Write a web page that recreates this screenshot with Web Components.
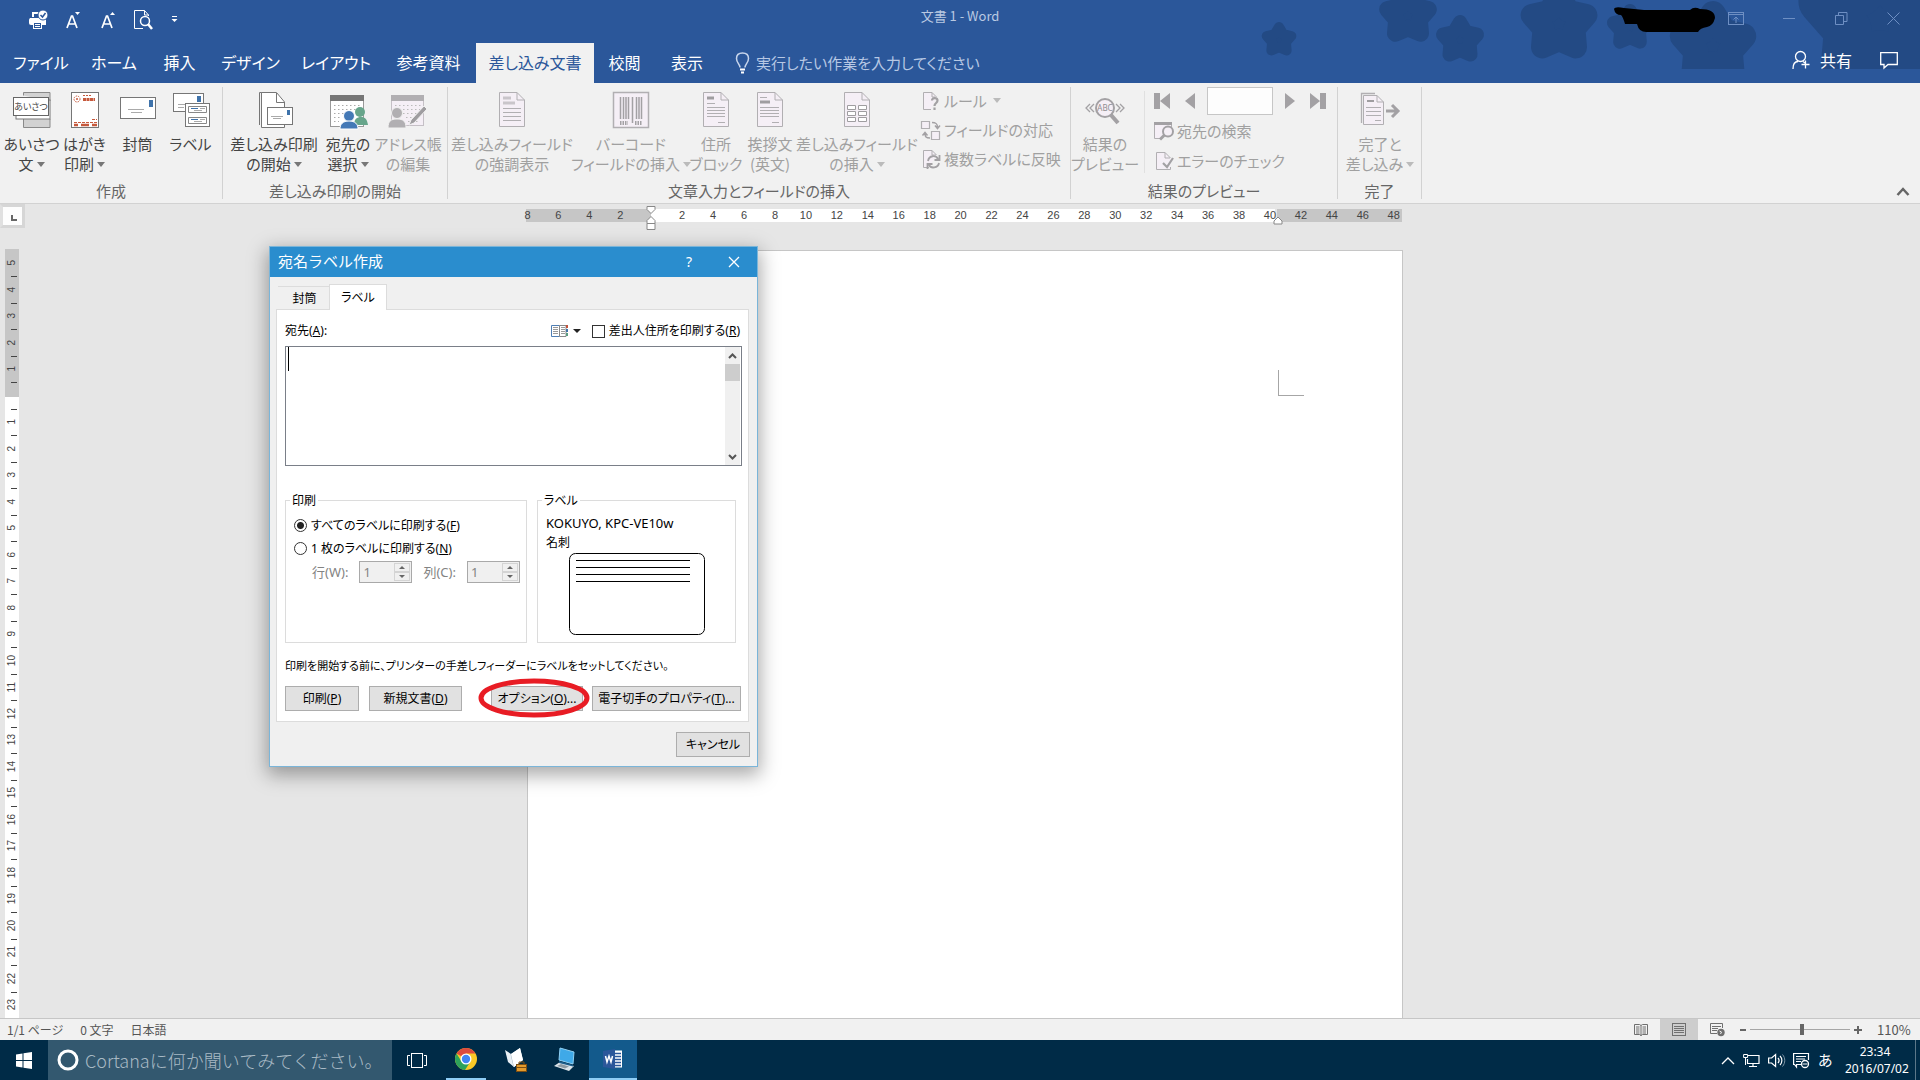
<!DOCTYPE html>
<html lang="ja">
<head>
<meta charset="utf-8">
<title>文書 1 - Word</title>
<style>
html, body { margin: 0; height: 100%; }
body { overflow: hidden; font-family: "Noto Sans CJK JP", sans-serif; font-feature-settings: "palt"; }
</style>
</head>
<body>
<word-desktop></word-desktop>

<script>
const define = (name, html, setup) => {
  const template = document.createElement('template');
  template.innerHTML = html;
  customElements.define(name, class extends HTMLElement {
    constructor() {
      super();
      this.attachShadow({ mode: 'open' }).append(template.content.cloneNode(true));
    }
    connectedCallback() { if (setup && !this.ready) { this.ready = true; setup(this, this.shadowRoot); } }
  });
};

/* ---------- icons: [width, height, markup] ---------- */
const pageShape = (w, h, f, stroke, fill) =>
  `<path d="M.5 .5H${w - f}L${w - .5} ${f}V${h - .5}H.5Z" fill="${fill}" stroke="${stroke}"/><path d="M${w - f} .5V${f}H${w - .5}" fill="none" stroke="${stroke}"/>`;
const G = '#b1afb2', P = '#f5eff6', D = '#6f6f6f';
const ICONS = {
  quickprint: [20, 20, `<g fill="none" stroke="#fff" stroke-width="2"><path d="M5 7V3h6"/><path d="M2 9h4M2 13h3M15 14h3"/></g><rect x="1" y="8" width="17" height="7" rx="2" fill="#fff"/><rect x="5.500" y="12.500" width="8" height="6" fill="#2b579a" stroke="#fff"/><path d="M7 14.500h5M7 16.500h5" stroke="#fff"/><circle cx="15" cy="5" r="5" fill="#fff" stroke="#2b579a"/><path d="M12.500 5l2 2 3-4" fill="none" stroke="#2b579a" stroke-width="1.500"/>`],
  fontdown: [16, 18, `<path d="M1 17L5.500 5h1L11 17M3 13h6" fill="none" stroke="#fff" stroke-width="1.700"/><path d="M9 1h5l-2.500 3z" fill="#fff"/>`],
  fontup: [16, 18, `<path d="M2 17L6.500 5h1L12 17M4 13h6" fill="none" stroke="#fff" stroke-width="1.700"/><path d="M10 4h5l-2.500-3z" fill="#fff"/>`],
  preview: [19, 20, `<path d="M14.500 6V5L10.500 .500H.5V18.500H9M10.500 .500V5H14.500" fill="none" stroke="#fff"/><circle cx="11" cy="11" r="4.500" fill="none" stroke="#fff" stroke-width="1.500"/><path d="M14 14l4 5" stroke="#fff" stroke-width="2.500"/>`],
  custom: [7, 7, `<path d="M1 .500h5" stroke="#fff"/><path d="M.500 3h6l-3 3z" fill="#fff"/>`],
  bulb: [15, 22, `<path d="M5 15.500C5 12 1.500 11 1.500 6.500 1.500 3 4 1 7.500 1s6 2 6 5.500C13.500 11 10 12 10 15.500" fill="none" stroke="#c7d5ec" stroke-width="1.500"/><path d="M5 17.500h5M6 20.500h3" stroke="#fff" stroke-width="2"/>`],
  ribbonopt: [16, 13, `<rect x=".500" y=".500" width="15" height="12" fill="none" stroke="#6e8fc3"/><path d="M1 2.500h14M8 11V5M5.500 7.500L8 5l2.500 2.500" fill="none" stroke="#6e8fc3"/>`],
  min: [13, 13, `<path d="M0 6.500h12" stroke="#6e8fc3"/>`],
  restore: [13, 13, `<path d="M.5 3.500h8v9h-8zM3.500 3V.5h8.500v9H9" fill="none" stroke="#6e8fc3"/>`],
  close: [13, 13, `<path d="M.5 .5l12 12M12.500 .5l-12 12" stroke="#6e8fc3"/>`],
  person: [19, 20, `<circle cx="8.500" cy="6.500" r="5" fill="none" stroke="#fff" stroke-width="1.300"/><path d="M1 19C1 14 3 11.500 6 11.500M11 11.500l2 1.500M13.500 10.500v8M9.500 14.500h8" fill="none" stroke="#fff" stroke-width="1.300"/>`],
  comment: [18, 17, `<path d="M.700 .700H17.300V12.500H8L4 16V12.500H.700Z" fill="none" stroke="#fff" stroke-width="1.300"/>`],
  collapse: [14, 9, `<path d="M1.500 8L7 2l5.500 6" fill="none" stroke="#666" stroke-width="2.500"/>`],
  greeting: [38, 38, `<path d="M10.500 4.500V1.500H37V10M10.500 28V36.500H37V28" fill="#d2d2d2" stroke="#8a8a8a"/><rect x="3" y="9" width="34" height="19" fill="#fff" stroke="#777"/><rect x=".500" y="6.500" width="35" height="18" fill="#fff" stroke="#666"/><text x="18" y="19" font-size="9" text-anchor="middle" fill="#444" style="font-family:'Noto Sans CJK JP',sans-serif">あいさつ</text>`],
  postcard: [38, 38, `<rect x="5.500" y="1.500" width="27" height="35" fill="#fff" stroke="#767676"/><circle cx="11" cy="8" r="3" fill="none" stroke="#c6593c" stroke-dasharray="1.500 1"/><circle cx="11" cy="8" r="1" fill="#c6593c"/><path d="M17 4.500h9" stroke="#c6593c" stroke-dasharray="2 1"/><path d="M17 8.500h12" stroke="#c6593c" stroke-width="3" stroke-dasharray="3 .5"/><path d="M26 28.500h5M8 31.500h23" stroke="#c6593c" stroke-dasharray="3 1"/><path d="M8 34h4M15 34h8M26 34h5" stroke="#c6593c" stroke-width="2.500"/>`],
  envelope: [38, 38, `<rect x="1.500" y="6.500" width="35" height="21" fill="#fff" stroke="#767676"/><rect x="30" y="9" width="4" height="7" fill="#3f73ab"/><path d="M9 18.500h16M12 21.500h11" stroke="#aaa"/>`],
  labels: [38, 38, `<rect x="1.500" y="2.500" width="30" height="18" fill="#fff" stroke="#767676"/><rect x="25" y="5" width="4" height="6" fill="#3f73ab"/><path d="M6 13.500h7M6 16.500h6" stroke="#aaa"/><rect x="13.500" y="12.500" width="24" height="23" fill="#fff" stroke="#767676"/><path d="M16.500 15.500h18v6h-18zM16.500 26.500h18v6h-18z" fill="#fff" stroke="#888"/><path d="M19 17.500h7M19 28.500h7" stroke="#3f73ab"/><path d="M28 17.500h5M22 19.500h8M28 28.500h5M22 30.500h8" stroke="#aaa"/>`],
  mailmerge: [38, 38, `<path d="M4.500 34V1.500H19" fill="none" stroke="#767676"/><path d="M22.500 1.500L30.500 11V36.500H7.500V1.500Z" transform="translate(-1)" fill="#fff" stroke="#767676"/><path d="M21.500 2v9.500h8" fill="none" stroke="#767676"/><rect x="12.500" y="16.500" width="25" height="17" fill="#fff" stroke="#767676"/><rect x="32" y="19" width="3" height="5" fill="#3f73ab"/><path d="M16 25.500h12M18 27.500h8" stroke="#aaa"/>`],
  recipients: [38, 38, `<rect x="1.500" y="4.500" width="33" height="31" fill="#fff" stroke="#999"/><rect x="1" y="4" width="34" height="6" fill="#767676"/><path d="M5 14.500h28M5 18.500h28M5 22.500h12M5 26.500h7M5 30.500h5" stroke="#aaa" stroke-dasharray="1.500 2.500"/><circle cx="31" cy="21" r="5" fill="#67a58b"/><path d="M25 34c0-6 3-8 7-8s6 2 7 8z" fill="#67a58b"/><circle cx="20" cy="25" r="5.500" fill="#4479b6" stroke="#fff"/><path d="M11 38c0-5 3-8 9-8s9 3 9 8z" fill="#4479b6" stroke="#fff"/>`],
  editlist: [40, 38, `<rect x="3.500" y="4.500" width="32" height="30" fill="${P}" stroke="#c5c0c6"/><rect x="3" y="4" width="33" height="6" fill="${G}"/><path d="M7 14.500h27M7 18.500h27M7 22.500h25M18 26.500h12M20 30.500h12" stroke="#bbb" stroke-dasharray="1.500 2.500"/><circle cx="9" cy="22" r="5.500" fill="${G}" stroke="#f1f1f1"/><path d="M0 37c0-7 3-9 9-9s9 2 9 9z" fill="${G}" stroke="#f1f1f1"/><path d="M21 34l2-5 13-14 3 3-13 14z" fill="#9f9da0" stroke="#f1f1f1"/>`],
  highlight: [38, 38, `<g transform="translate(6 1)">${pageShape(26, 35, 8, G, P)}<path d="M4 6h8M4 11h12" stroke="#c9c5ca" stroke-width="3"/><path d="M4 16.500h18M4 20.500h18M4 24.500h18M4 28.500h18" stroke="${G}"/></g>`],
  barcode: [38, 38, `<rect x="1.500" y="1.500" width="35" height="35" fill="${P}" stroke="${G}" stroke-width="1.500"/><path d="M8.500 6v22M11.500 6v22M14 6v22M16.500 6v22M20.500 6v26M24.500 6v22M27 6v22M29.500 6v22" stroke="#a3a1a4" stroke-width="1.500"/><path d="M8 32h8M23 32h7" stroke="#a3a1a4" stroke-width="4" stroke-dasharray="1.500 1"/>`],
  address: [38, 38, `<g transform="translate(6 1)">${pageShape(26, 35, 8, G, P)}<path d="M4 6h7" stroke="#9f9da0" stroke-width="3"/><path d="M4 11.500h8M4 15.500h18M4 18.500h18M4 21.500h18M4 24.500h18M15 30.500h7" stroke="${G}"/></g>`],
  greetline: [38, 38, `<g transform="translate(6 1)">${pageShape(26, 35, 8, G, P)}<path d="M3 10h10" stroke="#9f9da0" stroke-width="3"/><path d="M3 5.500h7M3 15.500h19M3 18.500h19M3 21.500h19M3 24.500h19M15 30.500h7" stroke="${G}"/></g>`],
  insertfield: [38, 38, `<g transform="translate(6 1)">${pageShape(26, 35, 8, G, P)}<path d="M3.500 13.500h8v4h-8zM14.500 13.500h8v4h-8zM3.500 19.500h8v4h-8zM14.500 19.500h8v4h-8zM3.500 25.500h8v4h-8zM14.500 25.500h8v4h-8z" fill="#fff" stroke="#9f9da0"/></g>`],
  rules: [20, 20, `<path d="M15.500 6L11 1.500H2.500V18.500H10M11 1.500V6H14" fill="${P}" stroke="${G}"/><path d="M11 9.500C11 6 16.500 6.500 16.500 9.500 16.500 12 13.500 12 13.500 15M13.500 16.500V19" fill="none" stroke="#a3a1a4" stroke-width="2.200"/>`],
  match: [20, 20, `<path d="M.5 1.500h8v7h-8zM10.500 11.500h8v8h-8z" fill="${P}" stroke="${G}" stroke-width="1.200"/><path d="M11 2.500c4 0 5.500 1 5.500 5M14 5.500l2.500 3 2.500-3M9 18c-4 0-5-1-5-5M1.500 15.500L4 12.500l2.500 3" fill="none" stroke="#a3a1a4" stroke-width="1.500"/>`],
  update: [20, 20, `<path d="M15.500 6L11 1.500H2.500V18.500H8M11 1.500V6H15" fill="${P}" stroke="${G}"/><path d="M7 12c1-6 8-6 10-2M18.500 6v5h-5M18 14c-1 5-8 6-10 2M6.500 20v-5h5" fill="none" stroke="#a3a1a4" stroke-width="1.800"/>`],
  results: [40, 38, `<circle cx="20" cy="17" r="9" fill="${P}" stroke="#a3a1a4" stroke-width="2"/><path d="M26 24l7 8" stroke="#a3a1a4" stroke-width="4"/><path d="M5 13l-4 4 4 4M9 13l-4 4 4 4M31 13l4 4-4 4M35 13l4 4-4 4" fill="none" stroke="#a3a1a4" stroke-width="1.300"/><text x="20" y="20" font-size="8" text-anchor="middle" fill="#8f8d90" style="font-family:'Noto Sans',sans-serif">ABC</text>`],
  first: [16, 16, `<path d="M0 0h6v16H0zM16 0v16L6 8z" fill="#a3a1a4"/>`],
  prev: [12, 16, `<path d="M11 0v16L1 8z" fill="#a3a1a4"/>`],
  next: [12, 16, `<path d="M1 0v16L11 8z" fill="#a3a1a4"/>`],
  last: [16, 16, `<path d="M10 0h6v16h-6zM0 0v16L10 8z" fill="#a3a1a4"/>`],
  find: [20, 20, `<path d="M17.500 6V1.500H.5V17.500H6" fill="${P}" stroke="${G}"/><path d="M0 2.500h18" stroke="#a3a1a4" stroke-width="3"/><circle cx="14" cy="10.500" r="5" fill="${P}" stroke="#a3a1a4" stroke-width="2"/><path d="M10.500 14L6 18.500" stroke="#a3a1a4" stroke-width="3"/>`],
  check: [20, 20, `<path d="M16.500 7L11 1.500H2.500V18.500H16.500V16M11 1.500V7H16" fill="${P}" stroke="${G}"/><path d="M9 12l4 4 6-9" fill="none" stroke="#a3a1a4" stroke-width="2.200"/>`],
  finish: [40, 38, `<path d="M1.500 32V2.500H15" fill="none" stroke="${G}" stroke-width="1.300"/><g transform="translate(3 4)">${pageShape(21, 30, 7, G, P)}<path d="M4 6h7" stroke="#9f9da0" stroke-width="2"/><path d="M3 12.500h15M3 16.500h15M3 20.500h15M12 25.500h6" stroke="${G}"/></g><path d="M26 20h11M32 14l6 6-6 6" fill="none" stroke="#a3a1a4" stroke-width="3"/>`],
  book: [17, 14, `<path d="M.5 1.500H8.500V12.500H.5Z" fill="#fff" stroke="#4f7fb5"/><path d="M8.500 1.500H15V12.500H8.500Z" fill="#fff" stroke="#888"/><path d="M2 3.500h5M2 5.500h5M2 7.500h5M2 9.500h5M10 3.500h4M10 5.500h4M10 7.500h4M10 9.500h4" stroke="#999"/><path d="M16 1v3" stroke="#c0523c" stroke-width="2"/><path d="M16 5v3" stroke="#3f73ab" stroke-width="2"/><path d="M16 9v3" stroke="#5b9c80" stroke-width="2"/>`],
  dlgclose: [12, 12, `<path d="M1 1l10 10M11 1L1 11" stroke="#fff" stroke-width="1.300"/>`],
  up: [9, 6, `<path d="M1 5l3.500-3.500L8 5" fill="none" stroke="#555" stroke-width="2"/>`],
  down: [9, 6, `<path d="M1 1l3.500 3.500L8 1" fill="none" stroke="#555" stroke-width="2"/>`],
  read: [14, 14, `<path d="M.5 1.500h5l1.500 1 1.500-1h5v10h-5L7 12.500l-1.500-1h-5zM7 2.500V13" fill="none" stroke="${D}"/><path d="M2 4h3.500M2 6h3.500M2 8h3.500M2 10h3.500M8.500 4H12M8.500 6H12M8.500 8H12M8.500 10H12" stroke="${D}"/>`],
  print: [14, 14, `<rect x=".500" y=".500" width="13" height="12" fill="none" stroke="${D}"/><path d="M2 3.500h10M2 5.500h10M2 7.500h10M2 9.500h10" stroke="${D}"/>`],
  web: [15, 14, `<path d="M7 10.500H.5V.5H12.500V5M2 3.500h9M2 5.500h6M2 7.500h5" fill="none" stroke="${D}"/><circle cx="11" cy="9.500" r="3.700" fill="${D}"/><path d="M9.500 8l2 1-1 2" stroke="#f1f1f1" fill="none"/>`],
  start: [16, 17, `<path d="M0 2.500L6.500 1.500V8H0zM7.500 1.300L16 0V8H7.500zM0 9H6.500V15.500L0 14.500zM7.500 9H16V17L7.500 15.700z" fill="#fff"/>`],
  ring: [22, 22, `<circle cx="11" cy="11" r="9" fill="none" stroke="#fff" stroke-width="3"/>`],
  taskview: [20, 15, `<rect x="4.500" y=".500" width="11" height="14" fill="none" stroke="#fff"/><path d="M3 2.500H.5v10H3M17 2.500h2.500v10H17" fill="none" stroke="#fff"/>`],
  chrome: [24, 24, `<circle cx="12" cy="12" r="11" fill="#fbc926"/><path d="M12 12L2.500 6.500A11 11 0 0 1 21.500 6.500H12Z" fill="#dd4b3e"/><path d="M2.500 6.500A11 11 0 0 0 11 23L16.500 14.500 12 12 7.500 14.500Z" fill="#2da25b"/><circle cx="12" cy="12" r="5.500" fill="#fff"/><circle cx="12" cy="12" r="4.200" fill="#4285f4"/>`],
  bookcase: [26, 26, `<path d="M2 3l6 4 9-6 3 12-9 7-6-5z" fill="#e9f0f5"/><path d="M8 7l3 13" stroke="#a8bac6"/><path d="M17 1l3 12-9 7-3-13z" fill="#fff"/><rect x="13.500" y="17.500" width="10" height="7" fill="#e39a2c" stroke="#7b4e12"/><path d="M16 17v-2h5v2M13 20.500h11" fill="none" stroke="#7b4e12"/>`],
  laptop: [26, 26, `<path d="M8 1l14 4-1 12-14-4z" fill="#3fa9e8" stroke="#8fd0f3"/><path d="M2 19l6-4 14 4-5 5z" fill="#dde5ea"/><path d="M5 19l4-2 8 2.500-4 2z" fill="#8d9aa3"/><path d="M7 14l14 4v1.500L7 16z" fill="#1d5f8c"/>`],
  word: [20, 20, `<rect x="9" y="1.500" width="10" height="17" fill="#fff"/><path d="M11 4.500h7M11 7.500h7M11 10.500h7M11 13.500h7M11 16.500h7" stroke="#2b579a" stroke-width="1.500"/><path d="M0 2l12-2v20L0 18z" fill="#2b579a"/><path d="M2.500 7l1.500 6 2-6 2 6 1.500-6" fill="none" stroke="#fff" stroke-width="1.500"/>`],
  traychev: [14, 9, `<path d="M1 8l6-6 6 6" fill="none" stroke="#fff" stroke-width="1.300"/>`],
  net: [17, 15, `<path d="M5 2.500h11v8H4.500V6M10 10.500v3M6 13.500h8" fill="none" stroke="#fff" stroke-width="1.200"/><path d="M.6 1.500h4v3h-4zM2.500 5v7" fill="none" stroke="#fff"/>`],
  sound: [17, 15, `<path d="M.6 5h3l4-3.500v12l-4-3.500h-3z" fill="none" stroke="#fff" stroke-width="1.200"/><path d="M10 5c1.300 1.500 1.300 3.500 0 5M12 3c2.500 2.500 2.500 6.500 0 9" fill="none" stroke="#fff" stroke-width="1.200"/><path d="M14.500 1.500c3 3.500 3 8.500 0 12" fill="none" stroke="#7e95a5"/>`],
  note: [17, 17, `<path d="M8 12.500H3.500V15l-2-2.500H.6V1.500H15.500V8M3 4.500h10M3 7h9M3 9.500h5" fill="none" stroke="#fff" stroke-width="1.200"/><circle cx="12" cy="12" r="3.500" fill="none" stroke="#fff" stroke-width="1.300"/><path d="M9.500 12h5" stroke="#fff"/>`],
};
define('ui-icon', `<style>:host{display:block;flex:none}svg{display:block;overflow:visible}</style>`, (el, root) => {
  const [w, h, body] = ICONS[el.getAttribute('name')];
  root.innerHTML += `<svg width="${w}" height="${h}" viewBox="0 0 ${w} ${h}" aria-hidden="true">${body}</svg>`;
});

/* ---------- title bar ---------- */
define('star-backdrop', `
<style>:host{display:block;position:absolute;right:0;top:0}svg{display:block}</style>
<svg width="680" height="69" viewBox="1240 0 680 69" aria-hidden="true">
  <defs><path id="s" d="M0-36L12-16 34-11 19 6 21 29 0 20-21 29-19 6-34-11-12-16Z" stroke-width="28" stroke-linejoin="round"/></defs>
  <g fill="#234a84" stroke="#234a84">
    <use href="#s" transform="translate(1279 40) scale(.36)"/>
    <use href="#s" transform="translate(1408 16) scale(.6)"/>
    <use href="#s" transform="translate(1460 40) scale(.5)"/>
    <use href="#s" transform="translate(1559 24) scale(.8)"/>
    <use href="#s" transform="translate(1630 28) scale(.48)"/>
    <use href="#s" transform="translate(1713 46) scale(.9)"/>
    <use href="#s" transform="translate(1880 20) scale(1.700)"/>
  </g>
  <path d="M1614 9q1-3 10-1l20 2h46q4-4 10-1 15 0 15 9-2 8-8 9-7 1-9 5h-50q-9 1-11-8h-12q-2-7-4-9-6 0-7-6z" fill="#000"/>
</svg>`);

define('title-bar', `
<style>
:host{display:grid;grid-template-columns:1fr auto 1fr;height:43px;position:relative;color:#b9c9e2}
nav,.win{display:flex;align-items:center;height:37px}
nav{gap:18px;padding:2px 0 0 28px;box-sizing:border-box}
.win{justify-content:flex-end;gap:39px;padding-right:20px;box-sizing:border-box}
button{border:0;padding:0;background:none}
h1{margin:0;font:13px/31px "Noto Sans CJK JP",sans-serif}
</style>
<nav aria-label="クイック アクセス"><button><ui-icon name="quickprint"></ui-icon></button><button><ui-icon name="fontdown"></ui-icon></button><button><ui-icon name="fontup"></ui-icon></button><button><ui-icon name="preview"></ui-icon></button><button><ui-icon name="custom"></ui-icon></button></nav>
<h1>文書 1 - Word</h1>
<div class="win"><button><ui-icon name="ribbonopt"></ui-icon></button><button><ui-icon name="min"></ui-icon></button><button><ui-icon name="restore"></ui-icon></button><button><ui-icon name="close"></ui-icon></button></div>`);

define('ribbon-tab', `
<style>
:host{display:block;width:var(--w)}
button{width:100%;height:40px;border:0;padding:0 0 2px;background:none;color:#fff;font:16px/38px "Noto Sans CJK JP",sans-serif;font-feature-settings:inherit;white-space:nowrap}
:host([selected]) button{background:#f1f1f1;color:#2b579a}
</style><button role="tab"><slot></slot></button>`);

define('ribbon-tabs', `
<style>
:host{display:flex;position:relative;height:40px;padding-left:3px}
.tell{display:flex;align-items:center;gap:6px;padding-left:16px;flex:1}
input{flex:1;height:38px;border:0;background:none;outline:0;padding:0 0 2px;font:15px/36px "Noto Sans CJK JP",sans-serif;font-feature-settings:inherit}
input::placeholder{color:#b7c8e4;opacity:1}
.right{display:flex;align-items:center;gap:28px;padding:0 22px 6px 0}
button{display:flex;align-items:center;gap:9px;border:0;padding:0;background:none;color:#fff;font:16px/24px "Noto Sans CJK JP",sans-serif}
</style>
<ribbon-tab style="--w:76px">ファイル</ribbon-tab><ribbon-tab style="--w:70px">ホーム</ribbon-tab><ribbon-tab style="--w:61px">挿入</ribbon-tab><ribbon-tab style="--w:81px">デザイン</ribbon-tab><ribbon-tab style="--w:90px">レイアウト</ribbon-tab><ribbon-tab style="--w:95px">参考資料</ribbon-tab><ribbon-tab selected style="--w:118px">差し込み文書</ribbon-tab><ribbon-tab style="--w:61px">校閲</ribbon-tab><ribbon-tab style="--w:64px">表示</ribbon-tab>
<label class="tell"><ui-icon name="bulb"></ui-icon><input placeholder="実行したい作業を入力してください"></label>
<div class="right"><button><ui-icon name="person"></ui-icon>共有</button><button aria-label="コメント"><ui-icon name="comment"></ui-icon></button></div>`);

/* ---------- ribbon ---------- */
define('ribbon-group', `
<style>
:host{display:flex;flex-direction:column;box-sizing:border-box;width:var(--w);height:112px;border-right:1px solid #d2d2d2}
.body{display:flex;flex:1;padding:4px 0 0 var(--pad,3px)}
footer{text-align:center;color:#666;font-size:15px;line-height:18px;height:17px}
</style><div class="body"><slot></slot></div><footer><slot name="title"></slot></footer>`);

define('ribbon-button', `
<style>
:host{display:block;width:var(--w,53px)}
button{display:flex;flex-direction:column;align-items:center;gap:5px;width:100%;border:0;padding:0;background:none;color:#444;font:15px/20px "Noto Sans CJK JP",sans-serif;font-feature-settings:inherit;white-space:nowrap}
:host([disabled]) button{color:#a0a0a0}
span{display:flex;justify-content:center;align-items:center}
:host([menu]) .l2::after{content:"";margin-left:3px;border:4px solid transparent;border-top:5px solid #777;border-bottom:0}
:host([menu][disabled]) .l2::after{border-top-color:#bbb}
</style><button><slot name="icon"></slot><div><span><slot></slot></span><span class="l2"><slot name="second"></slot></span></div></button>`,
(el, root) => { root.querySelector('button').disabled = el.hasAttribute('disabled'); });

define('ribbon-small', `
<style>
:host{display:block}
button{display:flex;align-items:center;gap:3px;height:29px;border:0;padding:0;background:none;color:#a0a0a0;font:15px/29px "Noto Sans CJK JP",sans-serif;font-feature-settings:inherit;white-space:nowrap}
:host([menu]) button::after{content:"";margin-left:3px;border:4px solid transparent;border-top:5px solid #bbb;border-bottom:0}
</style><button disabled><slot name="icon"></slot><slot></slot></button>`);

const big = (icon, a, b, w, attrs = '') => `<ribbon-button ${attrs} style="--w:${w}px"><ui-icon slot="icon" name="${icon}"></ui-icon>${a}<span slot="second">${b}</span></ribbon-button>`;
const small = (icon, a, attrs = '') => `<ribbon-small ${attrs}><ui-icon slot="icon" name="${icon}"></ui-icon>${a}</ribbon-small>`;
define('mailings-ribbon', `
<style>
:host{display:flex;align-items:flex-start;box-sizing:border-box;height:121px;padding-top:4px;background:#f1f1f1;border-bottom:1px solid #d2d2d2;font-feature-settings:inherit}
.col{display:flex;flex-direction:column;padding-left:4px;margin-top:-5px}
.preview{display:flex;flex-direction:column;margin-left:8px;padding-left:9px;border-left:1px solid #e0e0e0;height:82px}
.nav{display:flex;align-items:center;margin-top:-4px;height:28px}
.nav button{border:0;padding:0;background:none}
.nav input{box-sizing:border-box;width:66px;height:28px;margin:0 11px;border:1px solid #c6c6c6;background:#fdfdfd}
.collapse{margin:100px 10px 0 auto;border:0;padding:0;background:none}
.nav,.rows{width:190px}
.rows{display:grid;gap:1px;padding-top:1px}
.gap{display:flex;gap:14px}
</style>
<ribbon-group style="--w:223px;--pad:5px">
${big('greeting', 'あいさつ', '文', 53, 'menu')}${big('postcard', 'はがき', '印刷', 53, 'menu')}${big('envelope', '封筒', '', 53)}${big('labels', 'ラベル', '', 53)}
<span slot="title">作成</span></ribbon-group>
<ribbon-group style="--w:225px">
${big('mailmerge', '差し込み印刷', 'の開始', 96, 'menu')}${big('recipients', '宛先の', '選択', 52, 'menu')}${big('editlist', 'アドレス帳', 'の編集', 68, 'disabled')}
<span slot="title">差し込み印刷の開始</span></ribbon-group>
<ribbon-group style="--w:623px">
${big('highlight', '差し込みフィールド', 'の強調表示', 122, 'disabled')}${big('barcode', 'バーコード', 'フィールドの挿入', 116, 'disabled menu')}${big('address', '住所', 'ブロック', 54, 'disabled')}${big('greetline', '挨拶文', '(英文)', 54, 'disabled')}${big('insertfield', '差し込みフィールド', 'の挿入', 120, 'disabled menu')}
<div class="col">${small('rules', 'ルール', 'menu')}${small('match', 'フィールドの対応')}${small('update', '複数ラベルに反映')}</div>
<span slot="title">文章入力とフィールドの挿入</span></ribbon-group>
<ribbon-group style="--w:267px">
${big('results', '結果の', 'プレビュー', 62, 'disabled')}
<div class="preview"><div class="nav"><div class="gap"><button disabled><ui-icon name="first"></ui-icon></button><button disabled><ui-icon name="prev"></ui-icon></button></div><input aria-label="レコード" disabled><div class="gap"><button disabled><ui-icon name="next"></ui-icon></button><button disabled><ui-icon name="last"></ui-icon></button></div></div>
<div class="rows">${small('find', '宛先の検索')}${small('check', 'エラーのチェック')}</div></div>
<span slot="title">結果のプレビュー</span></ribbon-group>
<ribbon-group style="--w:84px">${big('finish', '完了と', '差し込み', 78, 'disabled menu')}<span slot="title">完了</span></ribbon-group>
<button class="collapse" aria-label="リボンを折りたたむ"><ui-icon name="collapse"></ui-icon></button>`);

/* ---------- rulers and page ---------- */
define('horizontal-ruler', `
<style>
:host{display:block;width:876px;height:13px;position:relative;background:linear-gradient(90deg,#c6c6c6 14.300%,#fff 14.300% 85.500%,#e6e6e6 85.500% 85.700%,#c6c6c6 85.700%)}
.cells{display:flex;margin:0 -7px 0 -14px}
span{flex:1;text-align:center;font:11px/13px "Liberation Sans",sans-serif;color:#444}
svg{position:absolute;top:-3px;overflow:visible}
</style><div class="cells"></div>
<svg style="left:14.300%" width="1" height="26"><path d="M-4 .500h8v3l-4 4-4-4zM-4 17.500v-3l4-4 4 4v3zM-4 17.500h8v6h-8z" fill="#fff" stroke="#888"/></svg>
<svg style="left:85.800%" width="1" height="26"><path d="M-4 18v-3l4-4 4 4v3z" fill="#fff" stroke="#888"/></svg>`,
(el, root) => { for (let n = -8; n <= 48; n += 2) { const s = document.createElement('span'); s.textContent = n ? Math.abs(n) : ''; root.querySelector('.cells').append(s); } });

define('vertical-ruler', `
<style>
:host{display:flex;flex-direction:column;width:14px;margin-left:5px;padding-top:1px;background:linear-gradient(#c6c6c6 148px,#fff 148px)}
div{flex:1;display:flex;align-items:center;justify-content:center;background:linear-gradient(#444,#444) 6px 0/6px 1px no-repeat}
div:first-of-type{background:none}
span{writing-mode:vertical-rl;transform:rotate(180deg);font:10px/14px "Liberation Sans",sans-serif;color:#444}
</style>`,
(el, root) => { for (let n = -5; n <= 23; n++) { const d = document.createElement('div'); if (n) { const s = document.createElement('span'); s.textContent = Math.abs(n); d.append(s); } root.append(d); } });

define('document-area', `
<style>
:host{display:flex;flex-direction:column;flex:1;min-height:0;background:#e6e6e6;position:relative}
.top{display:flex;height:25px}
.tab{box-sizing:border-box;width:25px;height:24px;border:3px solid #d6d6d6;border-left-color:#e0e0e0;background:#fdfdfd;padding:8px 0 0 8px}
.tab::before{content:"";display:block;width:4px;height:4px;border:solid #666;border-width:0 0 2px 2px}
.mid{flex:1;display:flex;justify-content:center;padding:5px 17px 0 0}
.body{display:flex;flex:1;min-height:0;padding-top:20px}
.left{display:flex;width:25px}
.canvas{flex:1;display:flex;justify-content:center;padding:1px 15px 0 0}
article{box-sizing:border-box;width:876px;background:#fff;border:1px solid #c6c6c6;border-bottom:0;padding:119px 98px 0 0}
article::before{content:"";display:block;box-sizing:border-box;width:26px;height:26px;margin-left:auto;border:solid #a6a6a6;border-width:0 0 1px 1px}
</style>
<div class="top"><div class="tab"></div><div class="mid"><horizontal-ruler></horizontal-ruler></div></div>
<div class="body"><div class="left"><vertical-ruler></vertical-ruler></div><div class="canvas"><article></article></div></div>
<slot></slot>`);

/* ---------- dialog ---------- */
define('dialog-button', `
<style>
:host{display:block;width:var(--w)}
button{box-sizing:border-box;width:100%;height:25px;border:1px solid #adadad;background:#e1e1e1;padding:0;color:#000;font:12px/23px "Noto Sans","Noto Sans CJK JP",sans-serif;font-feature-settings:inherit;white-space:nowrap}
</style><button><slot></slot></button>`);

define('spin-box', `
<style>
:host{display:flex;flex:none;width:53px;height:22px;box-sizing:border-box;border:1px solid #a9a9a9;background:#f0f0f0;padding:1px}
input{box-sizing:border-box;width:33px;border:0;padding:0 0 0 2px;background:#f0f0f0;color:#838383;font:13px/18px "Noto Sans",sans-serif;appearance:textfield}
input::-webkit-inner-spin-button{appearance:none;margin:0}
.arrows{display:grid;flex:1}
button{border:1px solid #d4d4d4;padding:0;background:#f0f0f0;display:grid;place-items:center;min-height:0}
button::before{content:"";border:3px solid transparent;border-bottom:3px solid #666;border-top:0}
button+button::before{border-top:3px solid #666;border-bottom:0}
</style><input type="number" value="1" disabled><span class="arrows"><button disabled aria-label="増"></button><button disabled aria-label="減"></button></span>`,
(el, root) => root.querySelector('input').setAttribute('aria-label', el.getAttribute('label')));

define('label-dialog', `
<style>
:host{display:block;position:absolute;left:269px;top:42px;width:489px;height:521px;box-sizing:border-box;border:1px solid #7ab5d9;background:#f0f0f0;box-shadow:0 6px 18px 2px rgba(0,0,0,.34);color:#000;font:12px/16px "Noto Sans","Noto Sans CJK JP",sans-serif;font-feature-settings:inherit}
header{display:flex;align-items:center;height:30px;background:#2a8dce;color:#fff;padding:0 17px 0 8px}
h2{flex:1;margin:0;font:15px/28px "Noto Sans CJK JP",sans-serif;font-feature-settings:normal;height:30px}
header button{border:0;padding:0;background:none;color:#fff;font:14px/20px "Noto Sans",sans-serif;margin-left:36px}
.tabs{display:flex;align-items:flex-end;padding:8px 0 0 8px;height:24px}
.tabs button{box-sizing:border-box;height:23px;width:51px;border:1px solid #dcdcdc;border-width:1px 0 0;background:#f0f0f0;padding:2px 0 0 2px;font:inherit;font-feature-settings:inherit}
.tabs button+button{height:26px;width:58px;border-width:1px 1px 0;background:#fff;padding:1px 0 0;margin-bottom:-1px;text-align:center;position:relative}
section{box-sizing:border-box;height:413px;margin:0 8px 0 6px;border:1px solid #dcdcdc;background:#fff;padding:8px 6px 0 8px}
.row{display:flex;align-items:center;white-space:nowrap}
.addr{height:26px;padding:0 2px 2px 0}
.addr .to{flex:1}
.addr .pick{display:flex;align-items:center;gap:5px;border:0;padding:0;background:none;margin-right:11px}
.pick::after{content:"";border:4px solid transparent;border-top:4px solid #222;border-bottom:0}
.addr label{display:flex;align-items:center;gap:4px}
input[type=checkbox]{appearance:none;width:13px;height:13px;margin:0;border:1px solid #333;background:#fff}
.box{display:flex;position:relative;box-sizing:border-box;height:120px;border:1px solid #7a7f88}
textarea{flex:1;border:0;outline:0;resize:none;padding:4px;overflow:hidden;font:inherit}
.caret{position:absolute;left:2px;top:0;width:1px;height:24px;background:#000}
.bar{width:15px;display:flex;flex-direction:column;align-items:center;justify-content:space-between;background:#f0f0f0;margin-right:1px;padding:6px 0 5px;box-sizing:border-box}
.bar i{width:15px;height:17px;background:#cdcdcd;margin:5px 0 auto}
.sets{display:flex;gap:10px;margin-top:26px}
fieldset{box-sizing:border-box;height:151px;margin:0;border:1px solid #dcdcdc;padding:6px 8px 0;min-width:0}
legend{padding:0 2px;margin-left:-4px;height:16px;line-height:18px}
.print{width:242px}.label{width:199px}
.opt{display:flex;align-items:center;gap:4px;height:23px}
input[type=radio]{appearance:none;width:13px;height:13px;margin:0;border:1px solid #333;border-radius:50%;background:#fff}
input[type=radio]:checked{background:radial-gradient(#222 0 3px,#fff 4px)}
.cells{color:#838383;font-size:13px;gap:11px;padding:1px 0 0 18px}
.label div{line-height:19px}
.label .maker{font-size:13px}
.label svg{display:block;margin:1px 0 0 23px}
p{margin:15px 0 12px;font-size:11px;line-height:16px}
.acts{display:flex;position:relative}
.acts svg{position:absolute;left:192px;top:-8px}
.foot{display:flex;justify-content:flex-end;padding:10px 7px 0 0}
</style>
<header><h2>宛名ラベル作成</h2><button>?</button><button aria-label="閉じる"><ui-icon name="dlgclose"></ui-icon></button></header>
<div class="tabs"><button role="tab">封筒</button><button role="tab">ラベル</button></div>
<section>
  <div class="row addr"><label class="to" for="to"><span>宛先(<u>A</u>):</span></label><button class="pick" aria-label="住所録"><ui-icon name="book"></ui-icon></button><label><input type="checkbox"><span>差出人住所を印刷する(<u>R</u>)</span></label></div>
  <div class="box"><textarea id="to"></textarea><span class="caret"></span><div class="bar"><ui-icon name="up"></ui-icon><i></i><ui-icon name="down"></ui-icon></div></div>
  <div class="sets">
    <fieldset class="print"><legend>印刷</legend>
      <label class="opt"><input type="radio" name="r" checked><span>すべてのラベルに印刷する(<u>F</u>)</span></label>
      <label class="opt"><input type="radio" name="r"><span>1 枚のラベルに印刷する(<u>N</u>)</span></label>
      <div class="row cells"><span>行(W):</span><spin-box label="行"></spin-box><span>列(C):</span><spin-box label="列"></spin-box></div>
    </fieldset>
    <fieldset class="label"><legend>ラベル</legend><div class="maker">KOKUYO, KPC-VE10w</div><div>名刺</div>
      <svg width="137" height="83" aria-hidden="true"><rect x=".500" y=".500" width="135" height="81" rx="6" fill="#fff" stroke="#000"/><path d="M7 7.500h114M7 14.500h114M7 21.500h114M7 28.500h114" stroke="#000"/></svg>
    </fieldset>
  </div>
  <p>印刷を開始する前に、プリンターの手差しフィーダーにラベルをセットしてください。</p>
  <div class="acts"><dialog-button style="--w:74px">印刷(<u>P</u>)</dialog-button><dialog-button style="--w:93px;margin-left:10px">新規文書(<u>D</u>)</dialog-button><dialog-button style="--w:92px;margin-left:29px">オプション(<u>O</u>)...</dialog-button><dialog-button style="--w:149px;margin-left:9px">電子切手のプロパティ(<u>T</u>)...</dialog-button>
    <svg width="114" height="40" aria-hidden="true"><ellipse cx="57" cy="20" rx="53" ry="17" fill="none" stroke="#e81c24" stroke-width="5"/></svg></div>
</section>
<div class="foot"><dialog-button style="--w:74px">キャンセル</dialog-button></div>`);

/* ---------- status bar and task bar ---------- */
define('status-bar', `
<style>
:host{display:flex;align-items:center;box-sizing:border-box;height:22px;border-top:1px solid #c6c6c6;background:#f1f1f1;color:#555;font-size:12px;line-height:20px;padding:0 11px 0 7px}
.left{flex:1;display:flex;gap:17px}
button{border:0;padding:0;background:none;height:21px;width:38px;display:grid;place-items:center}
button.on{background:#cdcdcd}
.zoom{display:flex;align-items:center;gap:4px;margin-left:4px}
input{appearance:none;width:100px;height:12px;margin:0;background:linear-gradient(#a6a6a6,#a6a6a6) 0 50%/100% 1px no-repeat}
input::-webkit-slider-thumb{appearance:none;width:4px;height:11px;background:#666}
.s{width:6px;height:2px;background:#666}
.p{width:8px;height:8px;background:linear-gradient(#666,#666) 50%/100% 2px no-repeat,linear-gradient(#666,#666) 50%/2px 100% no-repeat}
output{width:32px;margin-left:11px;font-size:13px}
</style>
<div class="left"><span>1/1 ページ</span><span>0 文字</span><span>日本語</span></div>
<button aria-label="閲覧モード"><ui-icon name="read"></ui-icon></button><button class="on" aria-label="印刷レイアウト"><ui-icon name="print"></ui-icon></button><button aria-label="Web レイアウト"><ui-icon name="web"></ui-icon></button>
<div class="zoom"><span class="s"></span><input type="range" min="0" max="100" value="52" aria-label="ズーム"><span class="p"></span><output>110%</output></div>`);

define('task-bar', `
<style>
:host{display:flex;align-items:center;height:40px;background:#002b47;color:#fff}
button{display:grid;place-items:center;height:40px;border:0;padding:0;background:none;width:49px;box-sizing:border-box}
.start{width:48px}
label{display:flex;align-items:center;gap:6px;box-sizing:border-box;width:344px;height:40px;padding:0 9px;background:#33586f}
label input{flex:1;min-width:0;border:0;padding:0;background:none;outline:0;font:18px/40px "Noto Sans CJK JP",sans-serif;font-weight:300;font-feature-settings:normal}
label input::placeholder{color:#a9bac5;opacity:1}
.run{width:40px;margin:0 5px;border-bottom:2px solid #8ecdf5}
.on{width:48px;background:#135a8c;border-bottom:2px solid #8ecdf5}
.tray{display:flex;align-items:center;gap:8px;margin-left:auto;height:40px}
.ime{font-size:15px;line-height:20px;width:15px}
time{font:12px/17px "Noto Sans",sans-serif;text-align:center;width:60px;margin:0 2px 1px 4px}
.end{width:4px;height:40px;border-left:1px solid #5c7789}
</style>
<button class="start" aria-label="スタート"><ui-icon name="start"></ui-icon></button>
<label><ui-icon name="ring"></ui-icon><input placeholder="Cortanaに何か聞いてみてください。"></label>
<button aria-label="タスク ビュー"><ui-icon name="taskview"></ui-icon></button><button class="run"><ui-icon name="chrome"></ui-icon></button><button><ui-icon name="bookcase"></ui-icon></button><button><ui-icon name="laptop"></ui-icon></button><button class="on"><ui-icon name="word"></ui-icon></button>
<div class="tray"><ui-icon name="traychev"></ui-icon><ui-icon name="net"></ui-icon><ui-icon name="sound"></ui-icon><ui-icon name="note"></ui-icon><span class="ime">あ</span><time>23:34<br>2016/07/02</time><span class="end"></span></div>`);

define('word-desktop', `
<style>:host{display:flex;flex-direction:column;height:100vh}header{position:relative;background:#2b579a}</style>
<header><star-backdrop></star-backdrop><title-bar></title-bar><ribbon-tabs></ribbon-tabs></header><mailings-ribbon></mailings-ribbon>
<document-area><label-dialog></label-dialog></document-area>
<status-bar></status-bar><task-bar></task-bar>`);
</script>
</body>
</html>
